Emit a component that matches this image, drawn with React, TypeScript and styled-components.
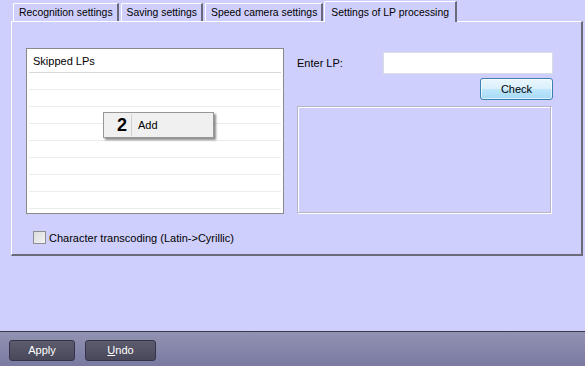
import { FC } from "react";
import styled, { createGlobalStyle } from "styled-components";

const GlobalStyle = createGlobalStyle`
  html, body {
    margin: 0;
    padding: 0;
    background: #cfcffd;
    font-family: "Liberation Sans", Arial, sans-serif;
    font-size: 11px;
    color: #000;
  }
`;

const Screen = styled.div`
  width: 585px;
  height: 366px;
  display: flex;
  flex-direction: column;
  background: #cfcffd;
  overflow: hidden;
`;

const Content = styled.div`
  flex: 1;
  padding: 1px 2px 0 11px;
`;

const TabStrip = styled.div`
  display: flex;
  align-items: flex-end;
  height: 20px;
  padding-left: 2px;
`;

const Tab = styled.div<{ $active?: boolean }>`
  height: ${(p) => (p.$active ? 20 : 17)}px;
  padding: 0 ${(p) => (p.$active ? 6 : 4)}px 0 ${(p) => (p.$active ? 6 : 5)}px;
  margin-right: ${(p) => (p.$active ? 0 : 2)}px;
  margin-left: ${(p) => (p.$active ? -1 : 0)}px;
  margin-bottom: ${(p) => (p.$active ? -1 : 0)}px;
  display: flex;
  align-items: center;
  background: #cfcffd;
  border-top: 1px solid #fff;
  border-left: 1px solid #fff;
  border-right: 2px solid #6a6a7a;
  border-top-left-radius: 2px;
  font-size: 10.4px;
  white-space: nowrap;
  position: relative;
  z-index: ${(p) => (p.$active ? 2 : 1)};
`;

const Panel = styled.div`
  height: 235px;
  box-sizing: border-box;
  border-top: 1px solid #fff;
  border-left: 1px solid #fff;
  border-right: 2px solid #6a6a78;
  border-bottom: 2px solid #6a6a78;
  padding: 26px 28px 0 14px;
  display: flex;
  flex-direction: column;
`;

const Columns = styled.div`
  display: flex;
  gap: 13px;
`;

const ListBox = styled.div`
  position: relative;
  width: 258px;
  height: 166px;
  box-sizing: border-box;
  border: 1px solid #8a8a8a;
  background: #fff;
  display: flex;
  flex-direction: column;
`;

const ListHeader = styled.div`
  height: 23px;
  display: flex;
  align-items: center;
  border-bottom: 1px solid #d8d8d8;
  margin: 0 2px;
  padding-left: 4px;
`;

const ListRow = styled.div`
  height: 16px;
  border-bottom: 1px solid #ececec;
  margin: 0 2px;
`;

const PopupMenu = styled.div`
  position: absolute;
  left: 76px;
  top: 63px;
  width: 111px;
  height: 26px;
  box-sizing: border-box;
  background: #f0f0f0;
  border: 1px solid #979797;
  box-shadow: 2px 2px 2px rgba(0, 0, 0, 0.45);
  display: flex;
  align-items: center;
`;

const MenuNumber = styled.span`
  width: 28px;
  text-align: right;
  padding-right: 4px;
  box-sizing: border-box;
  font-weight: bold;
  font-size: 18px;
  border-right: 1px solid #d0d0d0;
  height: 22px;
  line-height: 22px;
`;

const MenuLabel = styled.span`
  padding-left: 6px;
`;

const RightColumn = styled.div`
  flex: 1;
  display: flex;
  flex-direction: column;
  padding-top: 4px;
`;

const FieldRow = styled.div`
  display: flex;
  align-items: center;
  justify-content: space-between;
`;

const Label = styled.span``;

const TextInput = styled.div`
  width: 170px;
  height: 22px;
  box-sizing: border-box;
  background: #fff;
  border: 1px solid #dcdce4;
`;

const CheckButton = styled.div`
  align-self: flex-end;
  margin-top: 4px;
  width: 73px;
  height: 22px;
  box-sizing: border-box;
  border: 1px solid #3c7fb1;
  border-radius: 3px;
  background: linear-gradient(#eaf6fd 0%, #d9f0fc 50%, #bee6fd 51%, #a7d9f5 100%);
  box-shadow: inset 0 0 0 1px rgba(255, 255, 255, 0.6);
  display: flex;
  align-items: center;
  justify-content: center;
`;

const GroupBox = styled.div`
  margin-top: 6px;
  width: 254px;
  height: 107px;
  box-sizing: border-box;
  border: 1px solid #b6b6c8;
  box-shadow: inset 1px 1px 0 #fff, 1px 1px 0 #fff;
`;

const CheckRow = styled.label`
  margin-top: 17px;
  margin-left: 7px;
  display: flex;
  align-items: center;
  gap: 3px;
`;

const CheckBox = styled.span`
  width: 11px;
  height: 11px;
  border: 1px solid #8e8f8f;
  background: linear-gradient(135deg, #dcdcdc, #f4f4f4);
`;

const BottomBar = styled.div`
  height: 35px;
  border-top: 1px solid #3a3a4c;
  background: linear-gradient(#9292b2, #7a7aa2);
  display: flex;
  align-items: center;
  gap: 10px;
  padding: 2px 0 0 9px;
  box-sizing: border-box;
`;

const BarButton = styled.div<{ $width: number }>`
  width: ${(p) => p.$width}px;
  height: 21px;
  box-sizing: border-box;
  border: 1px solid #33334a;
  border-radius: 3px;
  background: linear-gradient(#5c5c6e, #48485a);
  color: #fff;
  display: flex;
  align-items: center;
  justify-content: center;
  font-size: 11px;
  u {
    text-decoration-thickness: 1px;
  }
`;

const tabs = [
  "Recognition settings",
  "Saving settings",
  "Speed camera settings",
  "Settings of LP processing",
];

const App: FC = () => {
  const rows = Array.from({ length: 8 });
  return (
    <Screen>
      <GlobalStyle />
      <Content>
        <TabStrip>
          {tabs.map((t, i) => (
            <Tab key={t} $active={i === tabs.length - 1}>
              {t}
            </Tab>
          ))}
        </TabStrip>
        <Panel>
          <Columns>
            <ListBox>
              <ListHeader>Skipped LPs</ListHeader>
              {rows.map((_, i) => (
                <ListRow key={i} />
              ))}
              <PopupMenu>
                <MenuNumber>2</MenuNumber>
                <MenuLabel>Add</MenuLabel>
              </PopupMenu>
            </ListBox>
            <RightColumn>
              <FieldRow>
                <Label>Enter LP:</Label>
                <TextInput />
              </FieldRow>
              <CheckButton>Check</CheckButton>
              <GroupBox />
            </RightColumn>
          </Columns>
          <CheckRow>
            <CheckBox />
            Character transcoding (Latin-&gt;Cyrillic)
          </CheckRow>
        </Panel>
      </Content>
      <BottomBar>
        <BarButton $width={66}>Apply</BarButton>
        <BarButton $width={71}>
          <span>
            <u>U</u>ndo
          </span>
        </BarButton>
      </BottomBar>
    </Screen>
  );
};

export default App;
